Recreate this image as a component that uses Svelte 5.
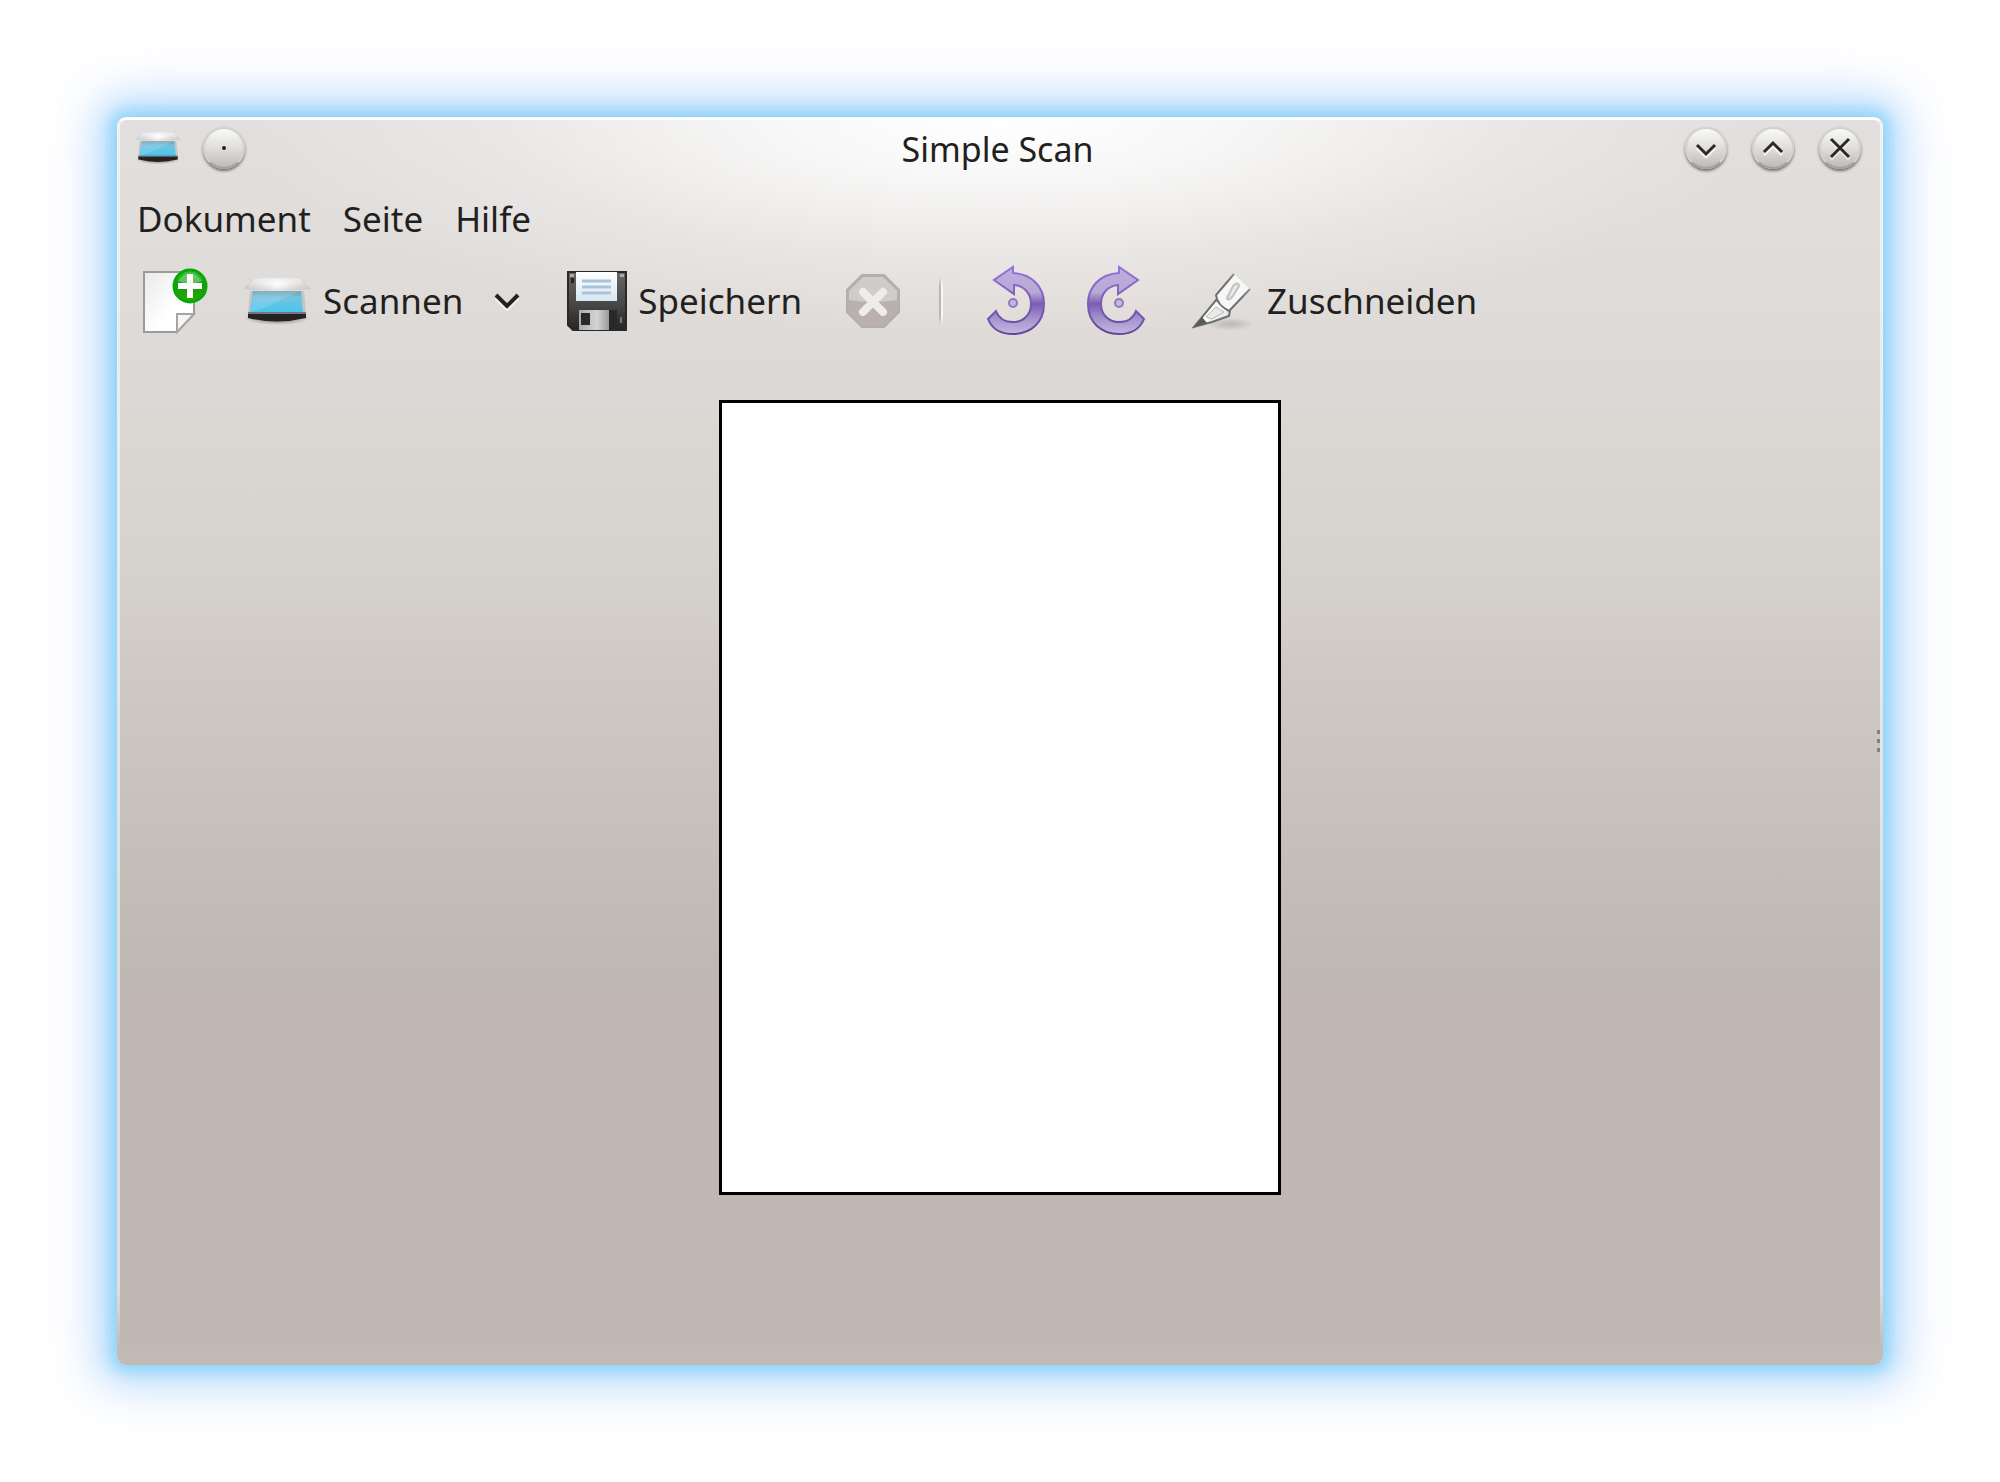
<script>
  const menus = ['Dokument', 'Seite', 'Hilfe'];
</script>

{#snippet scanner(cls)}
  <svg class={cls} viewBox="0 0 70 50" aria-hidden="true">
    <defs>
      <linearGradient id="lid" x1="0" x2="1" y1="0" y2="0">
        <stop offset="0" stop-color="#c4c3c3" stop-opacity=".7" /><stop offset=".2" stop-color="#d6d5d5" /><stop offset=".5" stop-color="#fff" /><stop offset=".8" stop-color="#d6d5d5" /><stop offset="1" stop-color="#c4c3c3" stop-opacity=".7" />
      </linearGradient>
      <linearGradient id="lidShade" x1="0" x2="0" y1="0" y2="1">
        <stop offset="0" stop-color="#ebeaea" /><stop offset=".5" stop-color="#fff" stop-opacity=".3" /><stop offset="1" stop-color="#bbb" stop-opacity=".4" />
      </linearGradient>
      <linearGradient id="glass" x1="0" x2="0" y1="0" y2="1">
        <stop offset="0" stop-color="#6f9fb2" /><stop offset=".3" stop-color="#73c3df" /><stop offset="1" stop-color="#45c6f2" />
      </linearGradient>
      <radialGradient id="scanShadow"><stop offset=".5" stop-color="#777" stop-opacity=".6" /><stop offset="1" stop-color="#777" stop-opacity="0" /></radialGradient>
    </defs>
    <ellipse cx="35" cy="42" rx="33" ry="7" fill="url(#scanShadow)" />
    <path d="M8 15H62L64 38H6Z" fill="#c3c5c6" />
    <path d="M11 15H59L61 37H8Z" fill="url(#glass)" />
    <path d="M12 15L58 15L20 33L9 36Z" fill="#fff" opacity=".14" />
    <path d="M6 36H64V39H6Z" fill="#777" />
    <path d="M6 38H64V42Q35 49 6 42Z" fill="#242321" />
    <path d="M12 3Q35 1 58 3L69 13Q35 16 1 13Z" fill="url(#lid)" />
    <path d="M12 3Q35 1 58 3L66 13Q35 16 4 13Z" fill="url(#lidShade)" />
  </svg>
{/snippet}

{#snippet rotate(flip)}
  <svg class="rotate" viewBox="0 0 60 72" aria-hidden="true">
    <defs>
      <linearGradient id="purple" x1="0" x2="0" y1="0" y2="1">
        <stop offset="0" stop-color="#bdaee0" /><stop offset=".38" stop-color="#b7a8d6" /><stop offset=".55" stop-color="#7c5cb4" /><stop offset=".75" stop-color="#a190cc" /><stop offset="1" stop-color="#c3b8e0" />
      </linearGradient>
      <linearGradient id="purpleLine" x1="0" x2="0" y1="0" y2="1">
        <stop offset="0" stop-color="#9a72da" /><stop offset="1" stop-color="#604a96" />
      </linearGradient>
    </defs>
    <g transform={flip ? 'translate(60 0) scale(-1 1)' : null}>
      <path d="M27 2V8C46 9 58 22 58 39C58 57 45 69 27 69C15 69 6 64 2 54L10 46C13 54 19 57 27 57C38 57 45 49 45 39C45 28 38 21 28 20V29L8 15Z" fill="url(#purple)" stroke="url(#purpleLine)" stroke-width="2" />
      <circle cx="27" cy="38" r="4" fill="#c3b7e0" stroke="#8f78bf" stroke-width="2" />
    </g>
  </svg>
{/snippet}

<main class="desktop">
  <div class="window">
    <header class="titlebar">
      <div class="side">
        {@render scanner('app-icon')}
        <button class="round" aria-label="Auf allen Arbeitsflächen">
          <svg viewBox="0 0 42 42"><circle cx="21" cy="21" r="2" fill="#222" /></svg>
        </button>
      </div>
      <h1>Simple Scan</h1>
      <div class="side right">
        <button class="round" aria-label="Minimieren">
          <svg viewBox="0 0 42 42"><path class="glow" d="M12 21L21 30L30 21" /><path d="M12 18L21 27L30 18" /></svg>
        </button>
        <button class="round" aria-label="Maximieren">
          <svg viewBox="0 0 42 42"><path class="glow" d="M12 28L21 19L30 28" /><path d="M12 25L21 16L30 25" /></svg>
        </button>
        <button class="round" aria-label="Schließen">
          <svg viewBox="0 0 42 42"><path class="glow" d="M12 14L30 32M30 14L12 32" /><path d="M12 12L30 30M30 12L12 30" /></svg>
        </button>
      </div>
    </header>

    <nav class="menubar">
      {#each menus as menu}
        <button>{menu}</button>
      {/each}
    </nav>

    <div class="toolbar" role="toolbar" aria-label="Werkzeugleiste">
      <button class="new" aria-label="Neues Dokument">
        <svg viewBox="0 0 66 66" aria-hidden="true">
          <defs>
            <linearGradient id="sheet" x1="0" x2="1" y1="0" y2="1"><stop offset="0" stop-color="#e9eaea" /><stop offset=".6" stop-color="#fff" /></linearGradient>
            <linearGradient id="green" x1="0" x2="0" y1="0" y2="1"><stop offset="0" stop-color="#46c846" /><stop offset=".45" stop-color="#139a10" /><stop offset="1" stop-color="#2cab00" /></linearGradient>
          </defs>
          <path d="M2 4H52V46L35 64H2Z" fill="url(#sheet)" stroke="#9b9b9b" stroke-width="2" />
          <path d="M35 64V46H52Z" fill="#f5f5f5" stroke="#a5a5a5" stroke-width="2" />
          <circle cx="48" cy="18" r="16" fill="url(#green)" stroke="#08a808" stroke-width="3" />
          <path d="M36 13Q48 -2 60 13Q48 18 36 13Z" fill="#fff" opacity=".3" />
          <path d="M45 6H51V15H60V21H51V30H45V21H36V15H45Z" fill="#fff" />
        </svg>
      </button>
      <button class="scan">
        {@render scanner('scan-icon')}
        <span>Scannen</span>
      </button>
      <button class="more" aria-label="Scanoptionen">
        <svg viewBox="0 0 28 20" aria-hidden="true"><path d="M3 7L14 18L25 7" fill="none" stroke="#fff" stroke-width="4" opacity=".6" /><path d="M3 4L14 15L25 4" fill="none" stroke="#222" stroke-width="4" /></svg>
      </button>
      <button class="save">
        <svg viewBox="0 0 60 60" aria-hidden="true">
          <defs>
            <linearGradient id="disk" x1="0" x2="0" y1="0" y2="1"><stop offset="0" stop-color="#666" /><stop offset=".6" stop-color="#444445" /><stop offset="1" stop-color="#252526" /></linearGradient>
            <linearGradient id="shutter" x1="0" x2="1" y1="0" y2="0"><stop offset="0" stop-color="#aaa" /><stop offset=".6" stop-color="#d4d4d4" /><stop offset="1" stop-color="#999" /></linearGradient>
            <linearGradient id="label" x1="0" x2="0" y1="0" y2="1"><stop offset="0" stop-color="#fff" /><stop offset="1" stop-color="#d7e6ef" /></linearGradient>
          </defs>
          <path d="M1 1H59V59H6L1 54Z" fill="url(#disk)" stroke="#292929" stroke-width="2" />
          <path d="M3 3H7V6H3ZM53 3H57V6H53Z" fill="#aaa" />
          <path d="M4 7H7V12H4Z" fill="#222" />
          <path d="M9 1H50V30H9Z" fill="url(#label)" />
          <path d="M15 10H44M15 16H44M15 22H44" stroke="#aac3dc" stroke-width="3" />
          <path d="M12 39H50V59H12Z" fill="#292929" />
          <path d="M12 39H42V59H12Z" fill="url(#shutter)" />
          <path d="M14 42H23V54H14Z" fill="#2b2a2a" />
          <path d="M54 46V52" stroke="#777" stroke-width="2" />
        </svg>
        <span>Speichern</span>
      </button>
      <button class="stop" aria-label="Scannen abbrechen" disabled>
        <svg viewBox="0 0 54 54" aria-hidden="true">
          <path d="M16 1H38L53 16V38L38 53H16L1 38V16Z" fill="#b9b0af" stroke="#b3aeac" stroke-width="2" />
          <path d="M17 3H37L51 17V26Q27 30 3 26V17Z" fill="#d0cccb" />
          <path d="M17 18L37 38M37 18L17 38" stroke="#efedec" stroke-width="8" stroke-linecap="round" />
        </svg>
      </button>
      <div class="separator" role="separator"></div>
      <button class="left" aria-label="Nach links drehen">{@render rotate(false)}</button>
      <button class="turn" aria-label="Nach rechts drehen">{@render rotate(true)}</button>
      <button class="crop">
        <svg viewBox="0 0 64 60" aria-hidden="true">
          <defs>
            <radialGradient id="penShadow"><stop offset="0" stop-color="#777" stop-opacity=".35" /><stop offset="1" stop-color="#777" stop-opacity="0" /></radialGradient>
            <linearGradient id="steel" x1="0" x2="1" y1="0" y2="1"><stop offset="0" stop-color="#d5d8d5" /><stop offset=".5" stop-color="#fff" /><stop offset="1" stop-color="#c5c7c5" /></linearGradient>
            <linearGradient id="fade" x1="26" x2="54" y1="30" y2="4" gradientUnits="userSpaceOnUse"><stop offset=".5" stop-color="#6b706c" /><stop offset="1" stop-color="#a5a8a5" /></linearGradient>
          </defs>
          <ellipse cx="38" cy="53" rx="24" ry="7" fill="url(#penShadow)" />
          <path d="M2 56L24 29L38 39L37 45L20 51Z" fill="url(#steel)" stroke="#6b706c" stroke-width="2" />
          <path d="M2 56L10 46L15 52Z" fill="#555b57" />
          <path d="M14 46L24 36L32 41L20 48Z" fill="#e9ebe9" stroke="#b5b9b5" />
          <path d="M42 3L24 24Q25 34 37 40L58 18Z" fill="#f6f7f6" />
          <path d="M42 3L24 24Q25 34 37 40L58 18" fill="none" stroke="url(#fade)" stroke-width="2" />
          <path d="M35 27L41 15Q46 10 47 15L41 25Q36 31 35 27Z" fill="#e9eae8" stroke="#c0c3bf" stroke-width="2" />
        </svg>
        <span>Zuschneiden</span>
      </button>
    </div>

    <section class="viewer" aria-label="Vorschau">
      <div class="page"></div>
    </section>
    <div class="grip" aria-hidden="true"><i></i><i></i><i></i></div>
  </div>
</main>

<style>
  :global(body) { margin: 0; background: #fff; }
  * { box-sizing: border-box; }
  .desktop {
    min-height: 100vh;
    padding: 117px;
    display: flex;
    font-family: 'Noto Sans', 'Open Sans', sans-serif;
    font-size: 35px;
    line-height: 44px;
    color: #221f1e;
  }
  .window {
    position: relative;
    flex: 1;
    min-width: 0;
    display: flex;
    flex-direction: column;
    border-radius: 9px;
    background:
      radial-gradient(ellipse 760px 220px at 50% 0, #fff 0, rgba(255, 255, 255, .75) 30%, rgba(255, 255, 255, .25) 68%, transparent 100%),
      linear-gradient(#e2e0de 0, #dedad7 18%, #d5d1cc 37%, #cec8c5 46%, #c8c2be 55%, #c1bcb6 63%, #beb8b3 69%, #c0b7b3 70%, #c0b7b3 98%, #c3bab6 99%);
    box-shadow:
      0 0 14px 6px rgba(120, 208, 250, .7),
      0 0 36px 16px rgba(135, 200, 250, .5),
      0 0 56px 24px rgba(180, 210, 252, .35);
  }
  .window::after {
    content: '';
    position: absolute;
    inset: 0;
    border: 3px solid rgba(255, 255, 255, .55);
    border-top-color: #fff;
    border-bottom: 0;
    border-radius: 9px;
    pointer-events: none;
    mask-image: linear-gradient(#000 94%, transparent 99%);
  }
  button {
    display: flex;
    align-items: center;
    padding: 0;
    border: 0;
    background: none;
    color: inherit;
    font: inherit;
  }
  svg { display: block; flex: none; }
  .titlebar {
    display: grid;
    grid-template-columns: 1fr auto 1fr;
    align-items: center;
    height: 64px;
    padding: 0 22px 0 17px;
  }
  h1 { margin: 0; font-size: 34px; font-weight: 400; line-height: 44px; }
  .side { display: flex; align-items: center; gap: 21px; padding-bottom: 2px; }
  .right { justify-content: flex-end; gap: 25px; }
  .app-icon { width: 48px; height: 34px; }
  .round {
    width: 42px;
    height: 42px;
    border-radius: 50%;
    background: linear-gradient(#f9f9f8, #e0dedb 50%, #bfbab5);
    border: 2px solid #d3d1cf;
    border-bottom-color: #a5a19d;
    box-shadow: 0 2px 3px rgba(0, 0, 0, .5);
    justify-content: center;
  }
  .round svg { width: 42px; height: 42px; }
  .round path { fill: none; stroke: #2c2927; stroke-width: 3; }
  .round .glow { stroke: #fff; opacity: .7; }
  .menubar { display: flex; gap: 32px; padding: 16px 20px 0; }
  .toolbar { display: flex; align-items: center; height: 76px; margin-top: 22px; padding-left: 25px; }
  .toolbar span { margin-left: 11px; }
  .new svg { width: 66px; height: 66px; }
  .scan { margin-left: 34px; }
  .scan-icon { width: 70px; height: 50px; }
  .more { margin-left: 30px; }
  .more svg { width: 28px; height: 20px; }
  .save { margin-left: 46px; }
  .save svg { width: 60px; height: 60px; }
  .stop { margin-left: 44px; }
  .stop svg { width: 54px; height: 54px; }
  .separator {
    width: 4px;
    height: 48px;
    margin: 0 43px 0 39px;
    background: linear-gradient(90deg, #bbb6b4 50%, #f8f7f6 50%);
    mask-image: linear-gradient(transparent, #000 20%, #000 80%, transparent);
  }
  .rotate { width: 60px; height: 72px; }
  .turn { margin-left: 40px; }
  .crop { margin-left: 46px; }
  .crop svg { width: 64px; height: 60px; }
  .viewer { flex: 1; display: flex; justify-content: center; align-items: flex-start; padding: 61px 0 168px; }
  .page {
    width: 33%;
    max-width: 562px;
    aspect-ratio: 562 / 795;
    background: #fff;
    border: 3px solid #000;
  }
  .grip {
    position: absolute;
    right: 0;
    top: 50%;
    display: grid;
    gap: 5px;
    transform: translateY(-50%);
  }
  .grip i { width: 6px; height: 4px; background: linear-gradient(90deg, #85807d 50%, #c9c5c2 50%); }
</style>
